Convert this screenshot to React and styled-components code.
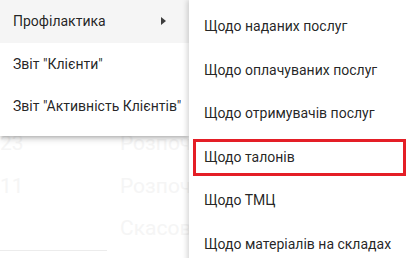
import styled, { createGlobalStyle } from 'styled-components';

const GlobalStyle = createGlobalStyle`
    html, body {
        margin: 0;
        padding: 0;
        background: #ffffff;
    }
    body {
        font-family: Roboto, "Liberation Sans", sans-serif;
    }
`;

const Page = styled.div`
    position: relative;
    width: 409px;
    height: 258px;
    overflow: hidden;
    background: #ffffff;
`;

const Table = styled.div`
    display: grid;
    grid-template-columns: 120px 1fr;
    grid-auto-rows: 42.5px;
    padding-top: 122px;
    width: 260px;
    color: #f5f5f5;
    font-size: 21px;
`;

const Cell = styled.div`
    display: flex;
    align-items: center;
    white-space: nowrap;
`;

const Rule = styled.div`
    width: 107px;
    height: 1px;
    background: #ececec;
`;

const Menu = styled.div`
    position: absolute;
    top: 0;
    left: 0;
    width: 189px;
    padding-bottom: 8px;
    background: #ffffff;
    box-shadow: 0 2px 4px -1px rgba(0,0,0,0.25), 0 4px 6px 0 rgba(0,0,0,0.12);
`;

const SubMenu = styled.div`
    position: absolute;
    top: 0;
    left: 189px;
    width: 220px;
    height: 270px;
    padding-top: 4.5px;
    box-sizing: border-box;
    background: #ffffff;
    box-shadow: -2px 0 5px rgba(0,0,0,0.16);
`;

const Item = styled.div`
    position: relative;
    display: flex;
    align-items: center;
    justify-content: space-between;
    height: ${props => props.h}px;
    padding: 0 ${props => props.pad}px;
    font-size: 14px;
    color: rgba(0,0,0,0.87);
    white-space: nowrap;
    background: ${props => props.active ? '#f5f5f5' : 'transparent'};

    &::after {
        content: '';
        display: ${props => props.marked ? 'block' : 'none'};
        position: absolute;
        top: 4px;
        left: 4px;
        right: 3px;
        bottom: 2.5px;
        border: 3px solid #e41e26;
    }
`;

const Arrow = styled.span`
    width: 0;
    height: 0;
    margin-right: 10px;
    border-top: 4px solid transparent;
    border-bottom: 4px solid transparent;
    border-left: 5px solid rgba(0,0,0,0.75);
`;

const mainItems = ['Профілактика', 'Звіт "Клієнти"', 'Звіт "Активність Клієнтів"'];

const subItems = [
    'Щодо наданих послуг',
    'Щодо оплачуваних послуг',
    'Щодо отримувачів послуг',
    'Щодо талонів',
    'Щодо ТМЦ',
    'Щодо матеріалів на складах',
];

const rows = [['23', 'Розпочата'], ['11', 'Розпочата'], ['', 'Скасована']];

const App = () => (
    <Page>
        <GlobalStyle />
        <Table>
            { rows.map(([num, status], index) =>
                [
                    <Cell key={'n' + index}>{num}</Cell>,
                    <Cell key={'s' + index}>{status}</Cell>,
                ]
            ) }
        </Table>
        <Rule />
        <Menu>
            { mainItems.map((label, index) =>
                <Item key={index} h={42.5} pad={13} active={index === 0}>
                    <span>{label}</span>
                    { index === 0 && <Arrow /> }
                </Item>
            ) }
        </Menu>
        <SubMenu>
            { subItems.map((label, index) =>
                <Item key={index} h={43.5} pad={15} marked={index === 3}>
                    <span>{label}</span>
                </Item>
            ) }
        </SubMenu>
    </Page>
);

export default App;
